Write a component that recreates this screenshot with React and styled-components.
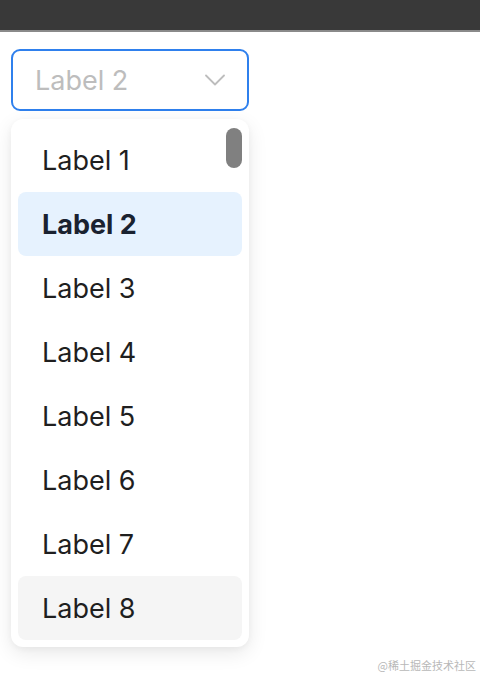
import styled, { createGlobalStyle } from "styled-components";

const GlobalStyle = createGlobalStyle`
  html, body {
    margin: 0;
    padding: 0;
    background: #ffffff;
    font-family: Inter, "Noto Sans", sans-serif;
  }
`;

const Page = styled.div`
  position: relative;
  width: 480px;
  height: 676px;
  overflow: hidden;
  background: #ffffff;
`;

const TopBar = styled.div`
  height: 30px;
  background: #393939;
  border-bottom: 2px solid #8a8a8a;
`;

const Content = styled.div`
  padding: 17px 0 0 11px;
  display: flex;
  flex-direction: column;
  gap: 8px;
  width: 238px;
`;

const Trigger = styled.div`
  box-sizing: border-box;
  height: 62px;
  border: 2px solid #2f80ed;
  border-radius: 9px;
  display: flex;
  align-items: center;
  justify-content: space-between;
  padding: 0 22px 0 22px;
  font-size: 27px;
  color: #bdbdbd;
  background: #fff;
`;

const Menu = styled.div`
  position: relative;
  box-sizing: border-box;
  height: 528px;
  padding: 9px 7px 7px 7px;
  border-radius: 12px;
  background: #fff;
  box-shadow: 0 6px 20px rgba(0, 0, 0, 0.09), 0 2px 6px rgba(0, 0, 0, 0.04);
  display: flex;
  flex-direction: column;
`;

const Item = styled.div`
  height: 64px;
  flex-shrink: 0;
  display: flex;
  align-items: center;
  padding-left: 24px;
  border-radius: 8px;
  font-size: 27px;
  color: ${(p) => (p.$selected ? "#1a2230" : "#1f1f1f")};
  font-weight: ${(p) => (p.$selected ? 700 : 400)};
  background: ${(p) =>
    p.$selected ? "#e6f2fe" : p.$hover ? "#f5f5f5" : "transparent"};
`;

const Thumb = styled.div`
  position: absolute;
  top: 9px;
  right: 7px;
  width: 16px;
  height: 40px;
  border-radius: 8px;
  background: #808080;
`;

const Watermark = styled.div`
  position: absolute;
  right: 4px;
  bottom: 3px;
  font-size: 11px;
  color: #b8b8b8;
  font-family: "Noto Sans CJK SC", sans-serif;
`;

const labels = ["Label 1", "Label 2", "Label 3", "Label 4", "Label 5", "Label 6", "Label 7", "Label 8"];

export default function App() {
  return (
    <Page>
      <GlobalStyle />
      <TopBar />
      <Content>
        <Trigger>
          <span>Label 2</span>
          <svg width="20" height="12" viewBox="0 0 20 12" fill="none">
            <path d="M1 1.5l9 9 9-9" stroke="#bdbdbd" strokeWidth="1.8" strokeLinecap="round" strokeLinejoin="round" />
          </svg>
        </Trigger>
        <Menu>
          {labels.map((l, i) => (
            <Item key={l} $selected={i === 1} $hover={i === 7}>
              {l}
            </Item>
          ))}
          <Thumb />
        </Menu>
      </Content>
      <Watermark>@稀土掘金技术社区</Watermark>
    </Page>
  );
}
